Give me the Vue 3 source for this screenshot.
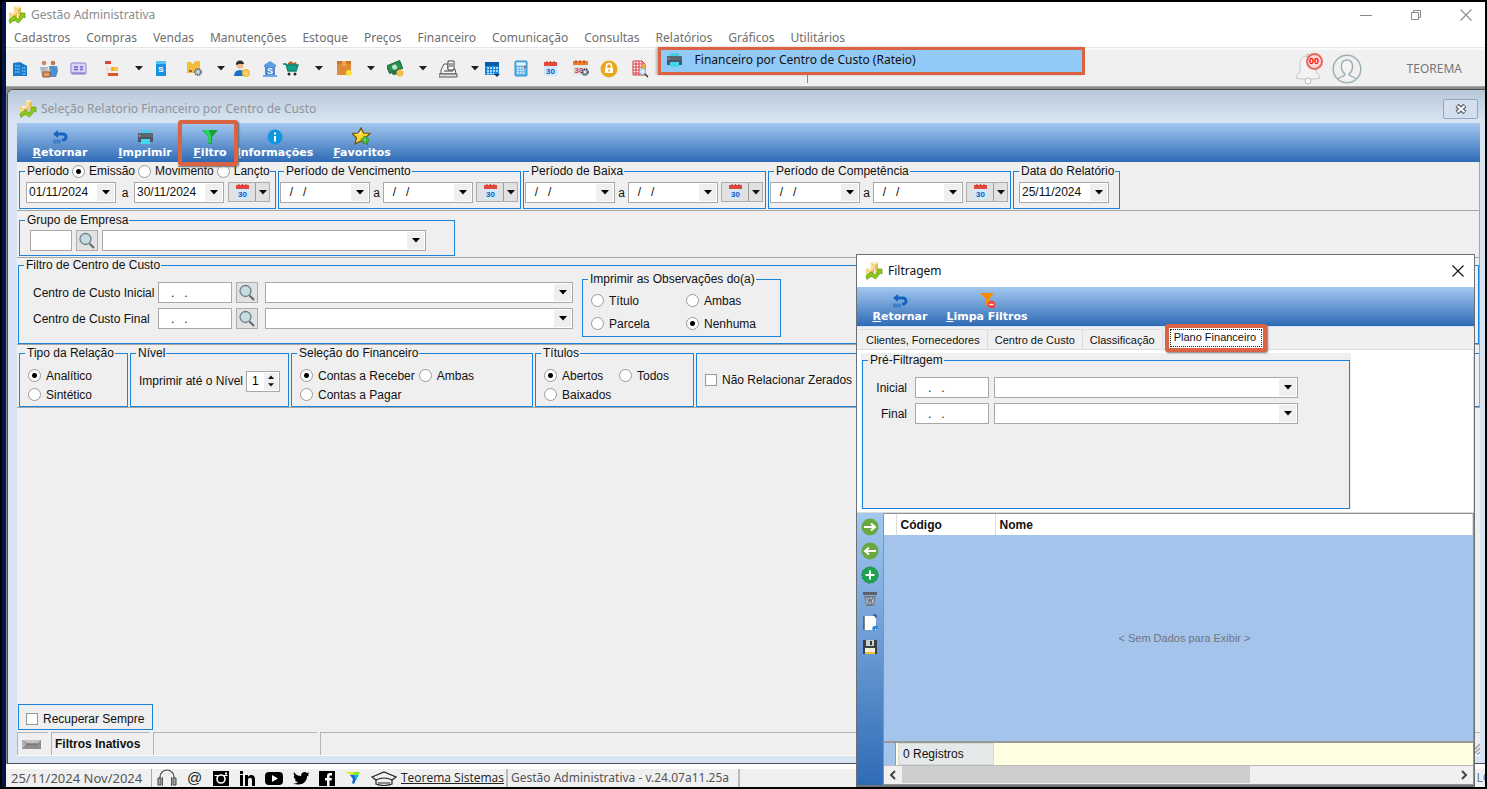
<script setup>
import { h } from 'vue'

const art = {
  app: ['0 0 18 18', '<path d="M6 1l3-1 4 1v6H6z" fill="#e3bd55"/><path d="M6 1l3-1 4 1-3 2z" fill="#fff0bf"/><path d="M6 2l4 1v5L6 7z" fill="#f6dc8e"/><path d="M1 7l4-1 4 1v6l-4 3-4-2z" fill="#e0b94e"/><path d="M1 7l4-1 4 1-4 2z" fill="#fff0bf"/><path d="M1 8l4 1v6l-4-1z" fill="#f6dc8e"/><path d="M10 7l4-1 2 2v3h-6z" fill="#ecca6c"/><path d="M1 14l5-4 4 3 3-4-1-1.500 5-.5v5l-1.500-1-5 6-4.500-3-4 3.500z" fill="#8cc916" stroke="#5f9a0e" stroke-width=".7"/>'],
  building: ['0 0 16 16', '<path d="M1 2l7-1 7 4v10H1z" fill="#1679c9"/><path d="M3 5h5M3 8h5M3 11h5M10 7h4M10 10h4M10 13h4" stroke="#7cc4f4" stroke-width="1.3" stroke-dasharray="1.4 .7"/>'],
  people: ['0 0 20 18', '<circle cx="5" cy="3" r="2.3" fill="#c98b5f"/><path d="M1 7h8v5L7 17H3z" fill="#a9b6c4"/><circle cx="14" cy="3" r="2.3" fill="#b77b50"/><path d="M10 6h8l1 5-2 6h-6z" fill="#4f91cf"/><path d="M6 9l5 2" stroke="#e9c39f" stroke-width="2"/><path d="M4 12h7v5H4z" fill="#d8a06d" stroke="#b4482e"/>'],
  card: ['0 0 17 14', '<rect x="1" y="1" width="15" height="11" rx="2" fill="#d9d3f8" stroke="#a59ee0" stroke-width="1.400"/><path d="M4 5h4M4 7.500h4M10 5h3M10 7.500h3" stroke="#6d63bd" stroke-width="1.500"/><path d="M2 11h13" stroke="#6d63bd"/>'],
  tree: ['0 0 16 18', '<path d="M3 4v10M3 9h5M3 15h6" stroke="#f0d6c4" fill="none"/><path d="M1 1h6v3H1z" fill="#d8432f"/><path d="M7 7h7v4H7z" fill="#f2b41f"/><path d="M4 13h10v3H4z" fill="#e0532f"/><path d="M10 7h4v4h-4z" fill="#f5c64b"/>'],
  sbook: ['0 0 12 17', '<path d="M1 1h10v15H1z" fill="#1792e0"/><path d="M1 1h10v3H1z" fill="#55c0f5"/><text x="6" y="12" font-size="8" font-weight="700" text-anchor="middle" fill="#fff" font-family="Liberation Sans, sans-serif">S</text>'],
  box: ['0 0 17 17', '<path d="M1 2h4l1 2 2-1 1-2h5v12H1z" fill="#f2bd3c"/><path d="M3 11h3" stroke="#6b5a2a" stroke-width="1.6"/><circle cx="12" cy="12" r="3" fill="#c9d2dd" stroke="#5f7186" stroke-width="2" stroke-dasharray="1.5 .6"/>'],
  person: ['0 0 17 18', '<circle cx="6" cy="5" r="3.500" fill="#f1b58a"/><path d="M2 5a4 4 0 018-1H5z" fill="#28323e"/><path d="M0 16q0-6 6-6t6 6z" fill="#1a73c7"/><circle cx="12" cy="13" r="4" fill="#f6bd3a"/><circle cx="12" cy="13" r="2" fill="#fbd97c"/>'],
  bank: ['0 0 14 18', '<path d="M7 1l6 4v2H1V5z" fill="#5b9be0"/><path d="M2 7h10v9H2z" fill="#4a8ad6"/><path d="M0 15h14v2H0z" fill="#6ca7e6"/><text x="7" y="14" font-size="9" font-weight="700" text-anchor="middle" fill="#fff" font-family="Liberation Sans, sans-serif">S</text>'],
  cart: ['0 0 17 17', '<path d="M5 3l3-2 2 2 3-1 1 4H5z" fill="#b4622e"/><path d="M0 4h3l2 7h8l2-6H3" fill="#0fa08a" stroke="#0b8876" stroke-width="1.4"/><circle cx="6" cy="14" r="1.500" fill="#223"/><circle cx="12" cy="14" r="1.500" fill="#223"/>'],
  crate: ['0 0 17 17', '<path d="M1 1h14v14H1z" fill="#dd8b35"/><path d="M1 1h14v3H1z" fill="#c9762a"/><path d="M6 1h4v5H6z" fill="#e9a552"/><circle cx="13" cy="13" r="3" fill="#ffe23c"/>'],
  money: ['0 0 18 18', '<g transform="rotate(-22 8 8)"><path d="M1 3h14v8H1z" fill="#2b8f51" stroke="#17683a"/><circle cx="8" cy="7" r="2.500" fill="#bde6c6"/></g><path d="M3 11l10-2 2 5-9 1z" fill="#2f6f4a"/><circle cx="13" cy="13" r="3.500" fill="#f4c045"/>'],
  scale: ['0 0 19 18', '<path d="M2 10L5 4h4v5h7l1 5H2z" fill="#f4f4f4" stroke="#555"/><path d="M9 1h6v9H9z" fill="#fff" stroke="#444"/><path d="M10 4h4M10 6h4M5 11h9" stroke="#444"/><path d="M0 14h18v3H0z" fill="#dfe3e6" stroke="#555"/>'],
  calblue: ['0 0 17 16', '<path d="M1 1h14v13H1z" fill="#1c86d8"/><path d="M1 1h14v4H1z" fill="#0c5da8"/><path d="M3 7h11M3 10h11M3 12.500h7" stroke="#d7efff" stroke-width="1.600" stroke-dasharray="2 1"/><path d="M10 13h6l-3 3z" fill="#12395f"/>'],
  calc: ['0 0 14 17', '<rect x="1" y="1" width="12" height="15" rx="1" fill="#62b6ea" stroke="#2f8fce"/><path d="M2.500 2.500h9v3h-9z" fill="#e6f7ff"/><path d="M3 8h8M3 10.500h8M3 13h8" stroke="#e9f8ff" stroke-width="1.500" stroke-dasharray="1.700 1"/><path d="M10 6h2v2h-2z" fill="#e4443b"/>'],
  cal: ['0 0 17 16', '<path d="M2 4h13v11H2z" fill="#cfe8fb"/><path d="M2 1h13v4H2z" fill="#e5473c"/><path d="M5 0v2M8.500 0v2M12 0v2" stroke="#b8392f"/><text x="8.500" y="13" font-size="8" font-weight="700" text-anchor="middle" fill="#1557b8" font-family="Liberation Sans, sans-serif">30</text>'],
  calgear: ['0 0 18 17', '<path d="M1 4h14v11H1z" fill="#dfe5ea"/><path d="M1 1h15v4H1z" fill="#ef7a2a"/><path d="M4 0v3M8 0v3M12 0v3" stroke="#9a4510"/><text x="7" y="13" font-size="8" font-weight="700" text-anchor="middle" fill="#d3392f" font-family="Liberation Sans, sans-serif">30</text><circle cx="13" cy="12" r="2.700" fill="#e4eaf0" stroke="#3b4e5e" stroke-width="2.200" stroke-dasharray="1.600 .6"/>'],
  lock: ['0 0 18 18', '<circle cx="9" cy="9" r="8.500" fill="#e9a71c"/><path d="M5 8h8v5H5z" fill="#fff"/><path d="M6.500 8V6a2.500 2.500 0 015 0v2" stroke="#fff" stroke-width="1.500" fill="none"/><path d="M9 9.500v2" stroke="#e9a71c" stroke-width="1.500"/>'],
  gridlens: ['0 0 18 18', '<path d="M2 1h9l3 3v11H2z" fill="#fff" stroke="#d7373f"/><path d="M2 4h11M2 7h11M2 10h11M2 13h11M5 1v14M8 1v14M11 1v14" stroke="#d7373f"/><path d="M11 4l3 1v6h-3z" fill="#f3a93c"/><circle cx="11.500" cy="11.500" r="3" fill="#d9effa" stroke="#88b6cf"/><path d="M14 14l3 3" stroke="#333" stroke-width="1.500"/>'],
  back: ['0 0 17 14', '<path d="M1 4l5-4v2.500h5a4.500 4.500 0 010 9H10V8.500h1a1.500 1.500 0 000-3H6V8z" fill="#1664bf"/><path d="M2 9.500v4M4 9.500v4M6 9.500v4M8 9.500v4" stroke="#1664bf"/>'],
  printer: ['0 0 17 16', '<path d="M4 1h9v4H4z" fill="#47cfea"/><path d="M1 4h15v9H1z" fill="#4b5563"/><path d="M1 4h15v4H1z" fill="#5c6672"/><path d="M4 10h9v5H4z" fill="#41d8ee"/><path d="M2 6h1.500v1.500H2z" fill="#9aa"/>'],
  funnel: ['0 0 16 16', '<path d="M0 1h16L10 8v7H6.500V8z" fill="#14a53a"/><path d="M1 1h6l2 6v7H6.500V8z" fill="#27d453"/>'],
  funnelminus: ['0 0 17 17', '<path d="M1 1h14l-5 6v7l-3-1V7z" fill="#fb8c00"/><circle cx="12.500" cy="12.500" r="3.800" fill="#f3412f"/><path d="M10.500 12.500h4" stroke="#fff" stroke-width="1.500"/>'],
  info: ['0 0 16 16', '<circle cx="8" cy="8" r="7.500" fill="#1296e0"/><path d="M7 7h2v5.500H7zM7 3.500h2v2H7z" fill="#fff"/>'],
  star: ['0 0 20 19', '<path d="M9 1l2.500 5 6.500.500-4.500 4.500 1.500 6-6-3-6 3 1.500-6L0 6.500 6.500 6z" fill="#ffd22e" stroke="#6d5210" stroke-width="1.200"/><path d="M5 8l4-4 1 3z" fill="#fff0a0"/><path d="M13 9v8M9 13h8" stroke="#2f9e2f" stroke-width="3.400"/><path d="M13 10v6M10 13h6" stroke="#6fe06a" stroke-width="1.200"/>'],
  lens: ['0 0 18 18', '<circle cx="7.500" cy="7" r="5.500" fill="#c5dbe0" stroke="#6b7f85" stroke-width="1.300"/><path d="M11.500 11.500l4.500 4.500" stroke="#666" stroke-width="2"/>'],
  bell: ['0 0 28 32', '<path d="M14 3c-6 0-8 4-8 9v6c0 3-4 4-4 7 6 1.500 18 1.500 24 0 0-3-4-4-4-7v-6c0-5-2-9-8-9z" fill="#f3f3f3" stroke="#c4c4c4"/><circle cx="14" cy="2.500" r="1.500" fill="none" stroke="#c4c4c4"/><circle cx="14" cy="28" r="3" fill="#fafafa" stroke="#bbb"/>'],
  user: ['0 0 30 30', '<circle cx="15" cy="15" r="13.800" fill="none" stroke="#9fb0b3" stroke-width="1.500"/><path d="M6 25c2-3 7-2 7-5-5-4-5-14 2-14s7 10 2 14c0 3 5 2 7 5" fill="#f5f5f5" stroke="#9fb0b3" stroke-width="1.500"/>'],
  min: ['0 0 12 12', '<path d="M0 6.500h12" stroke="#888"/>'],
  restore: ['0 0 12 12', '<path d="M1.500 3.500h7v7h-7zM3.500 3V1.500h7v7H9" fill="none" stroke="#888"/>'],
  close: ['0 0 12 12', '<path d="M.5.500l11 11M11.500.500l-11 11" stroke="currentColor" stroke-width="1.100"/>'],
  mdiclose: ['0 0 14 12', '<path d="M3 2.500l8 7M11 2.500l-8 7" stroke="#59636f" stroke-width="4.500"/><path d="M3.500 3l7 6M10.500 3l-7 6" stroke="#fff" stroke-width="2"/>'],
  headset: ['0 0 20 18', '<path d="M3 11V8a7 7 0 0114 0v3" fill="none" stroke="#444" stroke-width="1.200"/><path d="M1 9h3v7H1zM16 9h3v7h-3z" fill="#aaa" stroke="#444"/><path d="M5.500 8v9M14.500 8v9" stroke="#555"/>'],
  insta: ['0 0 16 16', '<path d="M0 1h16v15H0z" fill="#000"/><circle cx="8" cy="9" r="4" fill="none" stroke="#fff" stroke-width="1.600"/><path d="M1.500 5.500h4M10.500 5.500h4" stroke="#fff"/><path d="M12 2.500h2v2h-2z" fill="#fff"/>'],
  linkedin: ['0 0 16 16', '<path d="M1 5h3v11H1zM1 1h3v3H1zM6 5h3v2c2-3 7-2.500 7 2v7h-3v-6c0-3-4-3-4 0v6H6z" fill="#000"/>'],
  youtube: ['0 0 18 14', '<rect y="1" width="18" height="13" rx="4" fill="#000"/><path d="M7 4l6 3.500L7 11z" fill="#fff"/>'],
  twitter: ['0 0 16 14', '<path d="M1 1c2 3 4 4 7 4 0-4 4-5 6-3l2-.500-1 2 1 .500-2 1.500c0 6-6 10-14 7 2 0 4-.500 5-1.500-2 0-3-1-3-2.500h1C1 7.500.500 6 1 5l1 .300C.500 4 .500 2 1 1z" fill="#000"/>'],
  facebook: ['0 0 16 16', '<path d="M0 1h16v15H0z" fill="#000"/><path d="M8 16v-5.500H6V8h2V6q0-3 3-3h2v2.500h-1.500q-1 0-1 1V8H13l-.500 2.500h-2V16z" fill="#fff"/>'],
  teorema: ['0 0 16 14', '<path d="M0 1h15l-2 3H7z" fill="#8fe01a"/><path d="M5 4l8 0-4 9-2-1 1-4z" fill="#0b66d8"/><path d="M0 1h8l1 3z" fill="#e8ef20"/><path d="M9 4h5l-3 5z" fill="#19b6e8"/>'],
  hat: ['0 0 26 16', '<path d="M1 7l12-5 12 5-4 3v4q-8 3-16 0v-4z" fill="none" stroke="#222" stroke-width="1.200"/><path d="M5 10q8-4 16 0" fill="none" stroke="#222" stroke-width="1.200"/><path d="M7 13h12" stroke="#222"/>'],
  right: ['0 0 18 18', '<circle cx="9" cy="9" r="8.500" fill="#68a83f"/><path d="M3 9h10M10 5.500L14 9l-4 3.500" stroke="#fff" stroke-width="2" fill="none"/>'],
  left: ['0 0 18 18', '<circle cx="9" cy="9" r="8.500" fill="#68a83f"/><path d="M15 9H5M8 5.500L4 9l4 3.500" stroke="#fff" stroke-width="2" fill="none"/>'],
  plus: ['0 0 18 18', '<circle cx="9" cy="9" r="8" fill="#1ea54b" stroke="#16803a" stroke-dasharray="3 1"/><path d="M9 4.500v9M4.500 9h9" stroke="#fff" stroke-width="2"/>'],
  trash: ['0 0 18 18', '<path d="M2 2h14v3H2z" fill="#5c6166"/><path d="M3 6h12l-2 10H5z" fill="#6c7783"/><circle cx="9" cy="10.500" r="2.600" fill="none" stroke="#c2ccd6" stroke-width="1.200" stroke-dasharray="2 1"/><path d="M5 7l1 8M13 7l-1 8" stroke="#a8b2bd"/>'],
  page: ['0 0 18 18', '<path d="M3 2h10l2 2v12H3z" fill="#fff"/><path d="M3 2v14" stroke="#455" stroke-width="1.400"/><path d="M12 1h3v3" fill="none" stroke="#334"/><path d="M11 15a3 3 0 014-3l1-1 1 4h-3v2z" fill="#2b8bd8"/>'],
  floppy: ['0 0 18 18', '<path d="M2 2h14v14H2z" fill="#3c3f44"/><path d="M5 2h8v6H5z" fill="#c9ced4"/><path d="M9 3h2v4H9z" fill="#333"/><path d="M4 10h10v6H4z" fill="#f4f0dc"/><path d="M4 14h10v2H4z" fill="#f2c230"/>'],
  led: ['0 0 19 9', '<path d="M0 0h19v9H0z" fill="#8d8d8d"/><path d="M0 0h19l-3 3H5z" fill="#c2c2c2"/><path d="M0 9V0l4 4z" fill="#b4b4b4"/><path d="M4 4h12v1H4z" fill="#777"/>'],
  down: ['0 0 8 5', '<path d="M0 0h8L4 4.500z" fill="currentColor"/>'],
  up: ['0 0 8 5', '<path d="M0 5h8L4 .5z" fill="currentColor"/>'],
  chevl: ['0 0 8 10', '<path d="M6 1L2 5l4 4" fill="none" stroke="#444" stroke-width="2"/>'],
  chevr: ['0 0 8 10', '<path d="M2 1l4 4-4 4" fill="none" stroke="#444" stroke-width="2"/>'],
  grip: ['0 0 12 12', '<path d="M1 12L12 1M5 12l7-7M9 12l3-3" stroke="#9a9a9a" stroke-width="1.300"/>'],
}

const Icon = ({ name }) => {
  const [box, body] = art[name]
  const [, , w, hgt] = box.split(' ')
  return h('svg', { viewBox: box, width: w, height: hgt, 'aria-hidden': 'true', innerHTML: body })
}
Icon.props = ['name']

const menus = ['Cadastros', 'Compras', 'Vendas', 'Manutenções', 'Estoque', 'Preços', 'Financeiro', 'Comunicação', 'Consultas', 'Relatórios', 'Gráficos', 'Utilitários']
const tools = ['building', 'people', 'card', 'tree', 'down', 'sbook', 'box', 'down', 'person', 'bank', 'cart', 'down', 'crate', 'down', 'money', 'down', 'scale', 'down', 'calblue', 'calc', 'cal', 'calgear', 'lock', 'gridlens']
const actions = [
  { icon: 'back', key: 'R', rest: 'etornar' },
  { icon: 'printer', key: 'I', rest: 'mprimir' },
  { icon: 'funnel', key: 'F', rest: 'iltro', marked: true },
  { icon: 'info', key: 'I', rest: 'nformações' },
  { icon: 'star', key: 'F', rest: 'avoritos' },
]
const periods = ['Período de Vencimento', 'Período de Baixa', 'Período de Competência']
const blank = '  /   /'
const mask = '   .   .'
const social = ['insta', 'linkedin', 'youtube', 'twitter', 'facebook', 'teorema', 'hat']
const side = ['right', 'left', 'plus', 'trash', 'page', 'floppy']
</script>

<template>
  <div class="desktop">
    <div class="app">
      <header class="titlebar">
        <Icon name="app" />
        <span class="grow">Gestão Administrativa</span>
        <div class="winbtns">
          <button aria-label="Minimizar"><Icon name="min" /></button>
          <button aria-label="Restaurar"><Icon name="restore" /></button>
          <button aria-label="Fechar"><Icon name="close" /></button>
        </div>
      </header>
      <nav class="menu">
        <div v-for="m in menus" :key="m" class="menuitem">
          <button>{{ m }}</button>
          <div v-if="m === 'Relatórios'" class="popup">
            <button><Icon name="printer" />Financeiro por Centro de Custo (Rateio)</button>
          </div>
        </div>
      </nav>
      <div class="maintools">
        <div class="toolgrid">
          <button v-for="(t, i) in tools" :key="i" :aria-label="t"><Icon :name="t" /></button>
        </div>
        <div class="account">
          <span class="bell"><Icon name="bell" /><b>00</b></span>
          <Icon name="user" />
          <span class="company">TEOREMA</span>
        </div>
      </div>

      <main class="mdi">
        <section class="window">
          <div class="wintitle">
            <Icon name="app" />
            <span class="grow">Seleção Relatorio Financeiro por Centro de Custo</span>
            <button class="mdiclose" aria-label="Fechar"><Icon name="mdiclose" /></button>
          </div>
          <div class="bluebar mainbar">
            <button v-for="a in actions" :key="a.icon" :class="{ marked: a.marked }">
              <span class="pic"><Icon :name="a.icon" /></span>
              <span><u>{{ a.key }}</u>{{ a.rest }}</span>
            </button>
          </div>

          <div class="band first">
            <fieldset class="wide">
              <legend class="options">
                Período
                <label><input type="radio" name="periodo" checked />Emissão</label>
                <label><input type="radio" name="periodo" />Movimento</label>
                <label><input type="radio" name="periodo" />Lançto</label>
              </legend>
              <div class="dates">
                <span class="combo"><input aria-label="Data inicial" value="01/11/2024" /><button aria-label="Abrir"><Icon name="down" /></button></span>
                <span class="sep">a</span>
                <span class="combo"><input aria-label="Data final" value="30/11/2024" /><button aria-label="Abrir"><Icon name="down" /></button></span>
                <span class="calbtn"><button aria-label="Calendário"><Icon name="cal" /></button><button aria-label="Opções"><Icon name="down" /></button></span>
              </div>
            </fieldset>
            <fieldset v-for="p in periods" :key="p">
              <legend>{{ p }}</legend>
              <div class="dates">
                <span class="combo"><input :aria-label="p + ' inicial'" :value="blank" /><button aria-label="Abrir"><Icon name="down" /></button></span>
                <span class="sep">a</span>
                <span class="combo"><input :aria-label="p + ' final'" :value="blank" /><button aria-label="Abrir"><Icon name="down" /></button></span>
                <span class="calbtn"><button aria-label="Calendário"><Icon name="cal" /></button><button aria-label="Opções"><Icon name="down" /></button></span>
              </div>
            </fieldset>
            <fieldset class="single">
              <legend>Data do Relatório</legend>
              <div class="dates">
                <span class="combo"><input aria-label="Data do Relatório" value="25/11/2024" /><button aria-label="Abrir"><Icon name="down" /></button></span>
              </div>
            </fieldset>
          </div>

          <div class="band">
            <fieldset>
              <legend>Grupo de Empresa</legend>
              <div class="group">
                <input class="box code" aria-label="Código da empresa" />
                <button class="lens" aria-label="Procurar"><Icon name="lens" /></button>
                <span class="pick company-pick"><select aria-label="Empresa"><option></option></select><i><Icon name="down" /></i></span>
              </div>
            </fieldset>
          </div>

          <div class="band center">
            <fieldset class="grow">
              <legend>Filtro de Centro de Custo</legend>
              <div class="costs">
                <div class="costform">
                  <div v-for="n in ['Inicial', 'Final']" :key="n" class="costrow">
                    <label :for="'cc' + n">Centro de Custo {{ n }}</label>
                    <input :id="'cc' + n" class="box" :value="mask" />
                    <button class="lens" aria-label="Procurar"><Icon name="lens" /></button>
                    <span class="pick"><select :aria-label="'Nome ' + n"><option></option></select><i><Icon name="down" /></i></span>
                  </div>
                </div>
                <fieldset>
                  <legend>Imprimir as Observações do(a)</legend>
                  <div class="notes">
                    <label><input type="radio" name="obs" />Título</label>
                    <label><input type="radio" name="obs" />Ambas</label>
                    <label><input type="radio" name="obs" />Parcela</label>
                    <label><input type="radio" name="obs" checked />Nenhuma</label>
                  </div>
                </fieldset>
              </div>
            </fieldset>
          </div>

          <div class="band last">
            <fieldset>
              <legend>Tipo da Relação</legend>
              <div class="radios kind">
                <label><input type="radio" name="tipo" checked />Analítico</label>
                <label><input type="radio" name="tipo" />Sintético</label>
              </div>
            </fieldset>
            <fieldset>
              <legend>Nível</legend>
              <div class="level">
                <label for="nivel">Imprimir até o Nível</label>
                <span class="spin"><input id="nivel" value="1" /><span><button aria-label="Mais"><Icon name="up" /></button><button aria-label="Menos"><Icon name="down" /></button></span></span>
              </div>
            </fieldset>
            <fieldset>
              <legend>Seleção do Financeiro</legend>
              <div class="radios finance">
                <label><input type="radio" name="sel" checked />Contas a Receber</label>
                <label><input type="radio" name="sel" />Ambas</label>
                <label><input type="radio" name="sel" />Contas a Pagar</label>
              </div>
            </fieldset>
            <fieldset>
              <legend>Títulos</legend>
              <div class="radios titles">
                <label><input type="radio" name="tit" checked />Abertos</label>
                <label><input type="radio" name="tit" />Todos</label>
                <label><input type="radio" name="tit" />Baixados</label>
              </div>
            </fieldset>
            <fieldset class="bare grow">
              <label><input type="checkbox" />Não Relacionar Zerados</label>
            </fieldset>
          </div>

          <div class="space">
            <label class="keep"><input type="checkbox" />Recuperar Sempre</label>
          </div>
          <div class="cells">
            <span class="led"><Icon name="led" /></span>
            <b>Filtros Inativos</b>
            <span></span>
            <span class="end"><Icon name="grip" /></span>
          </div>
        </section>
      </main>

      <footer class="appstatus">
        <span class="day">25/11/2024 Nov/2024</span>
        <nav class="social">
          <a href="#" aria-label="Suporte"><Icon name="headset" /></a>
          <a href="#" class="at">@</a>
          <a v-for="s in social" :key="s" href="#" :aria-label="s"><Icon :name="s" /></a>
          <a href="#" class="site">Teorema Sistemas</a>
        </nav>
        <span class="version">Gestão Administrativa - v.24.07a11.25a</span>
        <span class="lo">LO</span>
      </footer>
    </div>

    <section class="dialog" role="dialog" aria-label="Filtragem">
      <div class="dlgtitle">
        <Icon name="app" />
        <span class="grow">Filtragem</span>
        <button aria-label="Fechar"><Icon name="close" /></button>
      </div>
      <div class="bluebar dlgbar">
        <button><span class="pic"><Icon name="back" /></span><span><u>R</u>etornar</span></button>
        <button><span class="pic"><Icon name="funnelminus" /></span><span><u>L</u>impa Filtros</span></button>
      </div>
      <div class="tabs" role="tablist">
        <button role="tab">Clientes, Fornecedores</button>
        <button role="tab">Centro de Custo</button>
        <button role="tab">Classificação</button>
        <button role="tab" aria-selected="true" class="active"><span>Plano Financeiro</span></button>
      </div>
      <div class="tabpanel">
        <div class="prefilter">
          <fieldset>
            <legend>Pré-Filtragem</legend>
            <div class="preform">
              <template v-for="n in ['Inicial', 'Final']" :key="n">
                <label :for="'pf' + n">{{ n }}</label>
                <input :id="'pf' + n" class="box" :value="mask" />
                <span class="pick"><select :aria-label="'Plano ' + n"><option></option></select><i><Icon name="down" /></i></span>
              </template>
            </div>
          </fieldset>
        </div>
      </div>
      <div class="data">
        <div class="sidebar">
          <button v-for="s in side" :key="s" :aria-label="s"><Icon :name="s" /></button>
        </div>
        <div class="grid">
          <table>
            <thead><tr><th></th><th>Código</th><th>Nome</th></tr></thead>
          </table>
          <p class="empty">&lt; Sem Dados para Exibir &gt;</p>
          <div class="count"><i></i><span>0 Registros</span></div>
          <div class="scroll">
            <button aria-label="Esquerda"><Icon name="chevl" /></button>
            <div class="track"><div class="thumb"></div></div>
            <button aria-label="Direita"><Icon name="chevr" /></button>
          </div>
        </div>
      </div>
    </section>
  </div>
</template>

<style>
body { background: #000; overflow: hidden; }
</style>

<style scoped>
*, ::before, ::after { box-sizing: border-box; }
svg { display: block; flex: none; }
button { font: inherit; color: inherit; background: none; border: 0; padding: 0; margin: 0; }
.grow { flex: 1; }
.desktop { position: relative; height: 100vh; padding: 2px; background: #000; font-family: "Liberation Sans", sans-serif; font-size: 12px; line-height: 14px; color: #111; }
.app { height: 100%; display: flex; flex-direction: column; overflow: hidden; background: #fff; border-left: 4px solid #04154a; }
.titlebar { height: 26px; flex: none; display: flex; align-items: center; gap: 5px; padding: 0 13px 0 2px; color: #8c8c8c; font-family: "Noto Sans", sans-serif; }
.winbtns { display: flex; gap: 38px; }
.menu { height: 19px; flex: none; display: flex; gap: 16px; padding: 0 8px; color: #6e6e6e; font-family: "Noto Sans", sans-serif; line-height: 20px; }
.menuitem { position: relative; }
.menuitem > button { display: block; line-height: 20px; }
.popup { position: absolute; top: 19px; left: 2px; z-index: 2; width: 427px; height: 28px; border: 3px solid #d96342; background: #91c9f7; color: #111; box-shadow: -2px 0 2px #bbb; }
.popup::after { content: ""; position: absolute; top: 25px; left: 146px; width: 1px; height: 8px; background: #888; }
.popup button { display: flex; gap: 12px; align-items: center; height: 20px; padding: 0 5px; white-space: nowrap; }
.maintools { height: 39px; flex: none; display: flex; align-items: center; justify-content: space-between; padding: 3px 23px 0 6px; background: #f0f0f0; border-top: 1px solid #e6e6e6; box-shadow: inset 0 2px #fafafa; }
.toolgrid { display: grid; align-items: center; grid-template-columns: 27px 31px 34px 31px 20px 31px 31px 17px 29px 20px 32px 21px 31px 20px 32px 20px 32px 13px 30px 28px 30px 28px 31px 20px; color: #222; }
.account { display: flex; align-items: center; gap: 10px; color: #777; font-family: "Noto Sans", sans-serif; }
.bell { position: relative; }
.bell b { position: absolute; left: 12px; top: 0; width: 17px; height: 17px; border: 2px solid #e8665a; border-radius: 50%; background: #fbdad6; color: #f00; font: 700 9px/13px "Liberation Sans", sans-serif; text-align: center; }
.company { margin-left: 35px; }

.mdi { flex: 1; min-height: 0; display: flex; background: #8b8b8b; padding: 2px 0 5px 1px; border-top: 1px solid #a8a8a8; box-shadow: inset 0 -5px #fff; }
.window { flex: 1; min-width: 0; display: flex; flex-direction: column; border: 1px solid #4c4c4c; border-width: 1px 0 1px 1px; border-radius: 6px 0 0 0; padding: 0 5px 7px 9px; background: #d7e4f2; }
.wintitle { height: 33px; flex: none; display: flex; align-items: center; gap: 4px; margin: 0 -5px 0 -9px; padding: 5px 7px 0 11px; color: #8f9499; border-radius: 5px 0 0 0; background: linear-gradient(#b8c8d8, #d9e6f4); font-family: "Noto Sans", sans-serif; }
.mdiclose { width: 35px; height: 20px; display: flex; align-items: center; justify-content: center; border: 1px solid #93a6bd; border-radius: 2px; background: #d3dfec; }
.bluebar { height: 39px; flex: none; display: grid; background: linear-gradient(#a3c8f0, #2f6bb5); color: #fff; font-family: "DejaVu Sans", sans-serif; font-weight: 700; font-size: 11px; }
.bluebar button { position: relative; display: flex; flex-direction: column; align-items: center; padding-top: 4px; white-space: nowrap; }
.pic { height: 19px; display: flex; align-items: center; }
.mainbar { grid-template-columns: 86px 84px 46px 84px 90px; }
.marked { z-index: 1; }
.marked::after { content: ""; position: absolute; top: -3px; left: -9px; width: 60px; height: 46px; border: 4px solid #d96342; border-radius: 3px; box-shadow: 1px 1px 2px #666; }
.dlgbar { grid-template-columns: 86px 88px; }

.band { flex: none; display: flex; gap: 2px; padding: 2px 0 1px 2px; background: #efefef; border: 1px solid #a5a5a5; border-width: 0 1px 1px 0; }
fieldset { min-width: 0; margin: 0; padding: 0; border: 1px solid #1a82d8; }
legend { margin-left: 5px; padding: 0 1px 0 2px; line-height: 14px; white-space: nowrap; }
label { display: flex; align-items: center; gap: 5px; white-space: nowrap; }
input[type="radio"] { appearance: none; flex: none; width: 13px; height: 13px; margin: 0; border: 1px solid #9a9a9a; border-radius: 50%; background: #fff; }
input[type="radio"]:checked { background: radial-gradient(circle, #000 2px, #fff 3px); }
input[type="checkbox"] { appearance: none; flex: none; width: 12px; height: 12px; margin: 0; border: 1px solid #999; background: #fff; }
.options { display: flex; gap: 3px; padding-right: 0; }
.options label { gap: 4px; }
.dates { display: flex; padding: 4px 2px 4px 1px; }
.wide .dates { padding: 4px 5px 4px 6px; }
.single .dates { padding: 4px 10px 4px 5px; }
.sep { width: 13px; line-height: 22px; text-align: center; }
.wide .sep { width: 18px; }
.combo { display: flex; width: 90px; height: 21px; border: 1px solid #a8a8a8; background: #fff; }
.combo input { flex: 1; min-width: 0; border: 0; padding: 0 0 2px 2px; font: inherit; color: inherit; background: none; }
.combo button, .pick i { display: flex; align-items: center; justify-content: center; width: 17px; margin: 1px; background: #efefef; color: #000; }
.calbtn { display: flex; width: 42px; height: 20px; margin-left: 3px; border: 1px solid #adadad; background: #e1e1e1; }
.wide .calbtn { margin-left: 4px; }
.calbtn button { display: flex; align-items: center; justify-content: center; }
.calbtn button:first-child { flex: 1; }
.calbtn button:last-child { width: 14px; border-left: 1px solid #999; }
.box { width: 74px; height: 21px; border: 1px solid #a8a8a8; background: #fff; padding: 0 2px; font: inherit; color: inherit; }
.box.code { width: 42px; }
.lens { display: flex; align-items: center; justify-content: center; width: 22px; height: 21px; border: 1px solid #adadad; background: #e1e1e1; }
.pick { position: relative; display: flex; height: 21px; width: 308px; }
.pick select { appearance: none; width: 100%; border: 1px solid #a8a8a8; border-radius: 0; background: #fff; padding: 0 20px 0 2px; font: inherit; }
.pick i { position: absolute; top: 1px; right: 1px; bottom: 1px; pointer-events: none; }
.pick.company-pick { width: 324px; }
.group { display: flex; gap: 4px; padding: 3px 28px 4px 10px; }
.center { padding: 0 0 0 1px; }
.costs { display: flex; align-items: flex-start; gap: 12px; padding: 0 0 6px 14px; }
.costform { display: grid; gap: 5px; padding-top: 10px; }
.costrow { display: grid; grid-template-columns: 121px 74px 22px 308px; column-gap: 4px; }
.costrow .pick { margin-left: 3px; }
.notes { display: grid; grid-template-columns: 95px 90px; grid-auto-rows: 23px; padding: 3px 4px 1px 8px; }
.last { padding: 1px 0 0 2px; }
.radios { display: grid; grid-auto-rows: 19px; padding: 6px 8px 2px; }
.kind { width: 107px; }
.finance { grid-template-columns: auto 1fr; column-gap: 4px; width: 240px; }
.titles { grid-template-columns: 75px 1fr; width: 157px; }
.level { display: flex; align-items: center; justify-content: space-between; width: 157px; height: 42px; padding: 0 8px; }
.spin { display: flex; width: 34px; height: 21px; border: 1px solid #a8a8a8; background: #fff; }
.spin input { width: 16px; border: 0; padding: 0 0 0 5px; font: inherit; background: none; }
.spin > span { flex: 1; display: grid; background: #f0f0f0; margin: 1px; }
.spin button { display: flex; align-items: center; justify-content: center; }
.spin svg { width: 6px; height: 4px; }
.bare { display: flex; align-items: center; margin-top: 7px; padding-left: 8px; border-right: 0; }
.space { flex: 1; min-height: 0; display: flex; align-items: flex-end; padding: 0 0 2px 1px; background: #efefef; }
.keep { height: 26px; width: 135px; padding: 3px 7px 0; border: 1px solid #1a82d8; }
.cells { height: 24px; flex: none; display: flex; gap: 3px; background: #efefef; border-bottom: 1px solid #fff; }
.cells > * { border: 1px solid #b4b4b4; border-width: 1px 0 0 1px; line-height: 22px; }
.led { width: 31px; padding: 7px 4px; }
.cells b { width: 99px; padding-left: 3px; }
.cells > :nth-child(3) { width: 164px; }
.cells .end { flex: 1; display: flex; justify-content: flex-end; align-items: flex-end; }

.appstatus { height: 18px; flex: none; display: flex; background: #f0f0f0; color: #555; font-family: "Noto Sans", sans-serif; line-height: 18px; white-space: nowrap; overflow: hidden; }
.day { width: 146px; padding-left: 5px; border-right: 1px solid #aaa; font-size: 13px; }
.social { display: flex; align-items: center; gap: 10px; padding: 0 2px 0 5px; border-right: 2px solid #bbb; }
.social a { color: #222; }
.social .at { width: 16px; font-family: "Liberation Sans", sans-serif; font-size: 15px; line-height: 18px; text-decoration: none; }
.site { font-family: "Open Sans", sans-serif; line-height: 18px; margin-left: -6px; }
.version { padding: 0 9px 0 3px; border-right: 2px solid #bbb; }
.lo { flex: 1; display: flex; justify-content: flex-end; margin-right: -7px; color: #5a7fa8; }

.dialog { position: absolute; right: 12px; bottom: 2px; width: 619px; height: 533px; display: flex; flex-direction: column; border: 1px solid #6b7078; background: #f0f0f0; }
.dlgtitle { height: 32px; flex: none; display: flex; align-items: center; gap: 5px; padding: 0 10px 0 8px; background: #fff; font-family: "Noto Sans", sans-serif; }
.tabs { height: 23px; flex: none; display: flex; align-items: flex-end; padding-left: 2px; border-top: 1px solid #cfe3fa; font-size: 11px; }
.tabs button { height: 20px; padding: 0 7px; border: 1px solid #dcdcdc; border-width: 1px 1px 0 0; }
.tabs .active { height: 28px; margin: 0 0 -3px 2px; padding: 1px; border: 4px solid #d96342; border-radius: 3px; background: #fff; box-shadow: 1px 1px 2px #777; z-index: 1; }
.active span { display: block; border: 1px dotted #222; padding: 0 5px 2px 3px; }
.tabpanel { height: 164px; flex: none; display: flex; padding: 3px 0 3px 4px; background: #fff; border: 1px solid #dcdcdc; border-width: 1px 1px 1px 0; }
.prefilter { width: 490px; display: flex; background: #efefef; padding: 0 1px; }
.prefilter fieldset { flex: 1; }
.preform { display: grid; grid-template-columns: 47px 74px 304px; gap: 5px; padding-top: 10px; }
.preform label { justify-content: flex-end; padding-right: 3px; }
.preform .pick { width: 304px; }
.data { flex: 1; min-height: 0; display: flex; border-bottom: 1px solid #777; }
.sidebar { width: 26px; display: flex; flex-direction: column; align-items: center; gap: 6px; padding-top: 5px; background: linear-gradient(#a3c8f0, #2f6bb5); }
.sidebar button { height: 18px; }
.grid { flex: 1; min-width: 0; display: flex; flex-direction: column; border: 1px solid #8d9299; background: #a4c4ec; }
table { width: 100%; border-collapse: collapse; table-layout: fixed; background: #fff; }
th { height: 21px; padding: 0 0 0 4px; border-right: 1px solid #ddd; text-align: left; }
th:nth-child(1) { width: 12px; padding: 0; }
th:nth-child(2) { width: 99px; }
.empty { flex: 1; display: flex; align-items: center; justify-content: center; margin: 0; padding-left: 12px; color: #6e7680; font-size: 11px; }
.count { height: 24px; display: flex; gap: 2px; background: #ffffe1; border-top: 2px solid #999; }
.count i { width: 12px; background: #a4c4ec; border-right: 1px solid #999; }
.count span { width: 96px; padding-left: 4px; background: #e6e9ea; border: 1px solid #d5d8da; line-height: 20px; }
.scroll { height: 19px; display: flex; background: #f0f0f0; border-top: 1px solid #bbb; }
.scroll button { width: 18px; display: flex; align-items: center; justify-content: center; }
.track { flex: 1; }
.thumb { width: 63%; height: 17px; background: #cdcdcd; }
</style>
